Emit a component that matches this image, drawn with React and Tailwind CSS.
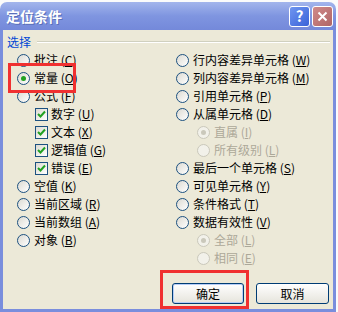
import React from 'react'

const FONT = { fontFamily: '"Noto Sans CJK SC", "Noto Sans", sans-serif' }

function Radio({ checked, disabled }) {
  return (
    <span
      className={`relative flex h-[13px] w-[13px] shrink-0 items-center justify-center rounded-full border ${
        disabled ? 'border-[#cac8bb] bg-[#f2f1ea]' : 'border-[#1c5180] bg-gradient-to-br from-[#dcdad2] to-white'
      }`}
    >
      {checked && (
        <span className={`h-[5px] w-[5px] rounded-full ${disabled ? 'bg-[#cac8bb]' : 'bg-[#21a121]'}`} />
      )}
    </span>
  )
}

function Check() {
  return (
    <span className="flex h-[13px] w-[13px] shrink-0 items-center justify-center border border-[#1c5180] bg-gradient-to-br from-[#dcdad2] to-white">
      <svg width="9" height="9" viewBox="0 0 9 9">
        <path d="M1 4 L3.5 6.5 L8 1.5" stroke="#21a121" strokeWidth="2" fill="none" />
      </svg>
    </span>
  )
}

function Label({ text, k, disabled }) {
  return (
    <span className={`whitespace-nowrap text-[12px] leading-[14px] ${disabled ? 'text-[#aca899]' : 'text-black'}`}>
      {text} (<u>{k}</u>)
    </span>
  )
}

const left = [
  { type: 'radio', text: '批注', k: 'C' },
  { type: 'radio', text: '常量', k: 'O', checked: true },
  { type: 'radio', text: '公式', k: 'F' },
  { type: 'check', text: '数字', k: 'U' },
  { type: 'check', text: '文本', k: 'X' },
  { type: 'check', text: '逻辑值', k: 'G' },
  { type: 'check', text: '错误', k: 'E' },
  { type: 'radio', text: '空值', k: 'K' },
  { type: 'radio', text: '当前区域', k: 'R' },
  { type: 'radio', text: '当前数组', k: 'A' },
  { type: 'radio', text: '对象', k: 'B' },
]

const right = [
  { text: '行内容差异单元格', k: 'W' },
  { text: '列内容差异单元格', k: 'M' },
  { text: '引用单元格', k: 'P' },
  { text: '从属单元格', k: 'D' },
  { text: '直属', k: 'I', sub: true, checked: true },
  { text: '所有级别', k: 'L', sub: true },
  { text: '最后一个单元格', k: 'S' },
  { text: '可见单元格', k: 'Y' },
  { text: '条件格式', k: 'T' },
  { text: '数据有效性', k: 'V' },
  { text: '全部', k: 'L', sub: true, checked: true },
  { text: '相同', k: 'E', sub: true },
]

export default function App() {
  return (
    <div className="relative h-[312px] w-[338px] overflow-hidden bg-[#fbfbfb]" style={FONT}>
      <div className="mt-[2px] flex h-[310px] w-[336px] flex-col">
        {/* title bar */}
        <div className="flex h-[28px] items-center justify-between rounded-t-[7px] bg-gradient-to-b from-[#a3b5ec] via-[#7f95e0] to-[#7489da] pl-[6px] pr-[3px]">
          <span className="text-[14px] font-bold text-white [text-shadow:1px_1px_0_#5a6fb8]">定位条件</span>
          <div className="flex gap-[2px]">
            <span className="flex h-[21px] w-[21px] items-center justify-center rounded-[3px] border border-white bg-gradient-to-br from-[#6f95f0] to-[#3b62d8] text-[15px] font-bold text-white">
              ?
            </span>
            <span className="flex h-[21px] w-[21px] items-center justify-center rounded-[3px] border border-white bg-gradient-to-br from-[#d08a8a] to-[#b06666]">
              <svg width="11" height="11" viewBox="0 0 11 11">
                <path d="M1.5 1.5 L9.5 9.5 M9.5 1.5 L1.5 9.5" stroke="white" strokeWidth="2" />
              </svg>
            </span>
          </div>
        </div>
        {/* body */}
        <div className="flex flex-1 flex-col border-x-[3px] border-b-[3px] border-[#7a8edd] bg-[#ece9d8]">
          <div className="mt-[5px] flex h-[14px] items-center pl-[4px] pr-[3px]">
            <span className="text-[12px] leading-[14px] text-[#0046d5]">选择</span>
            <div className="ml-[6px] flex-1 border-t border-b border-t-[#d0d0bf] border-b-white" />
          </div>
          <div className="mt-[2px] grid grid-cols-[159px_1fr] pl-[14px]">
            <div className="flex flex-col">
              {left.map((r) => (
                <div key={r.text} className={`flex h-[18px] items-center ${r.type === 'check' ? 'gap-[3px] pl-[18px]' : 'gap-[4px]'}`}>
                  {r.type === 'check' ? <Check /> : <Radio checked={r.checked} />}
                  <Label text={r.text} k={r.k} />
                </div>
              ))}
            </div>
            <div className="flex flex-col">
              {right.map((r, i) => (
                <div key={i} className={`flex h-[18px] items-center gap-[4px] ${r.sub ? 'pl-[21px]' : ''}`}>
                  <Radio checked={r.checked} disabled={r.sub} />
                  <Label text={r.text} k={r.k} disabled={r.sub} />
                </div>
              ))}
            </div>
          </div>
          <div className="mt-[16px] flex gap-[12px] pl-[169px]">
            <button className="flex h-[21px] w-[72px] items-center justify-center rounded-[3px] border border-[#003c74] bg-gradient-to-b from-white to-[#e6e4dc] text-[12px] text-black shadow-[inset_0_0_0_1px_#b6cdf7]">
              确定
            </button>
            <button className="flex h-[21px] w-[73px] items-center justify-center rounded-[3px] border border-[#003c74] bg-gradient-to-b from-white to-[#e6e4dc] text-[12px] text-black">
              取消
            </button>
          </div>
        </div>
      </div>
      {/* annotation boxes */}
      <div className="absolute left-[8px] top-[63px] h-[30px] w-[68px] border-[3px] border-[#f03030]" />
      <div className="absolute left-[160px] top-[270px] h-[39px] w-[89px] border-[3px] border-[#f03030]" />
    </div>
  )
}
